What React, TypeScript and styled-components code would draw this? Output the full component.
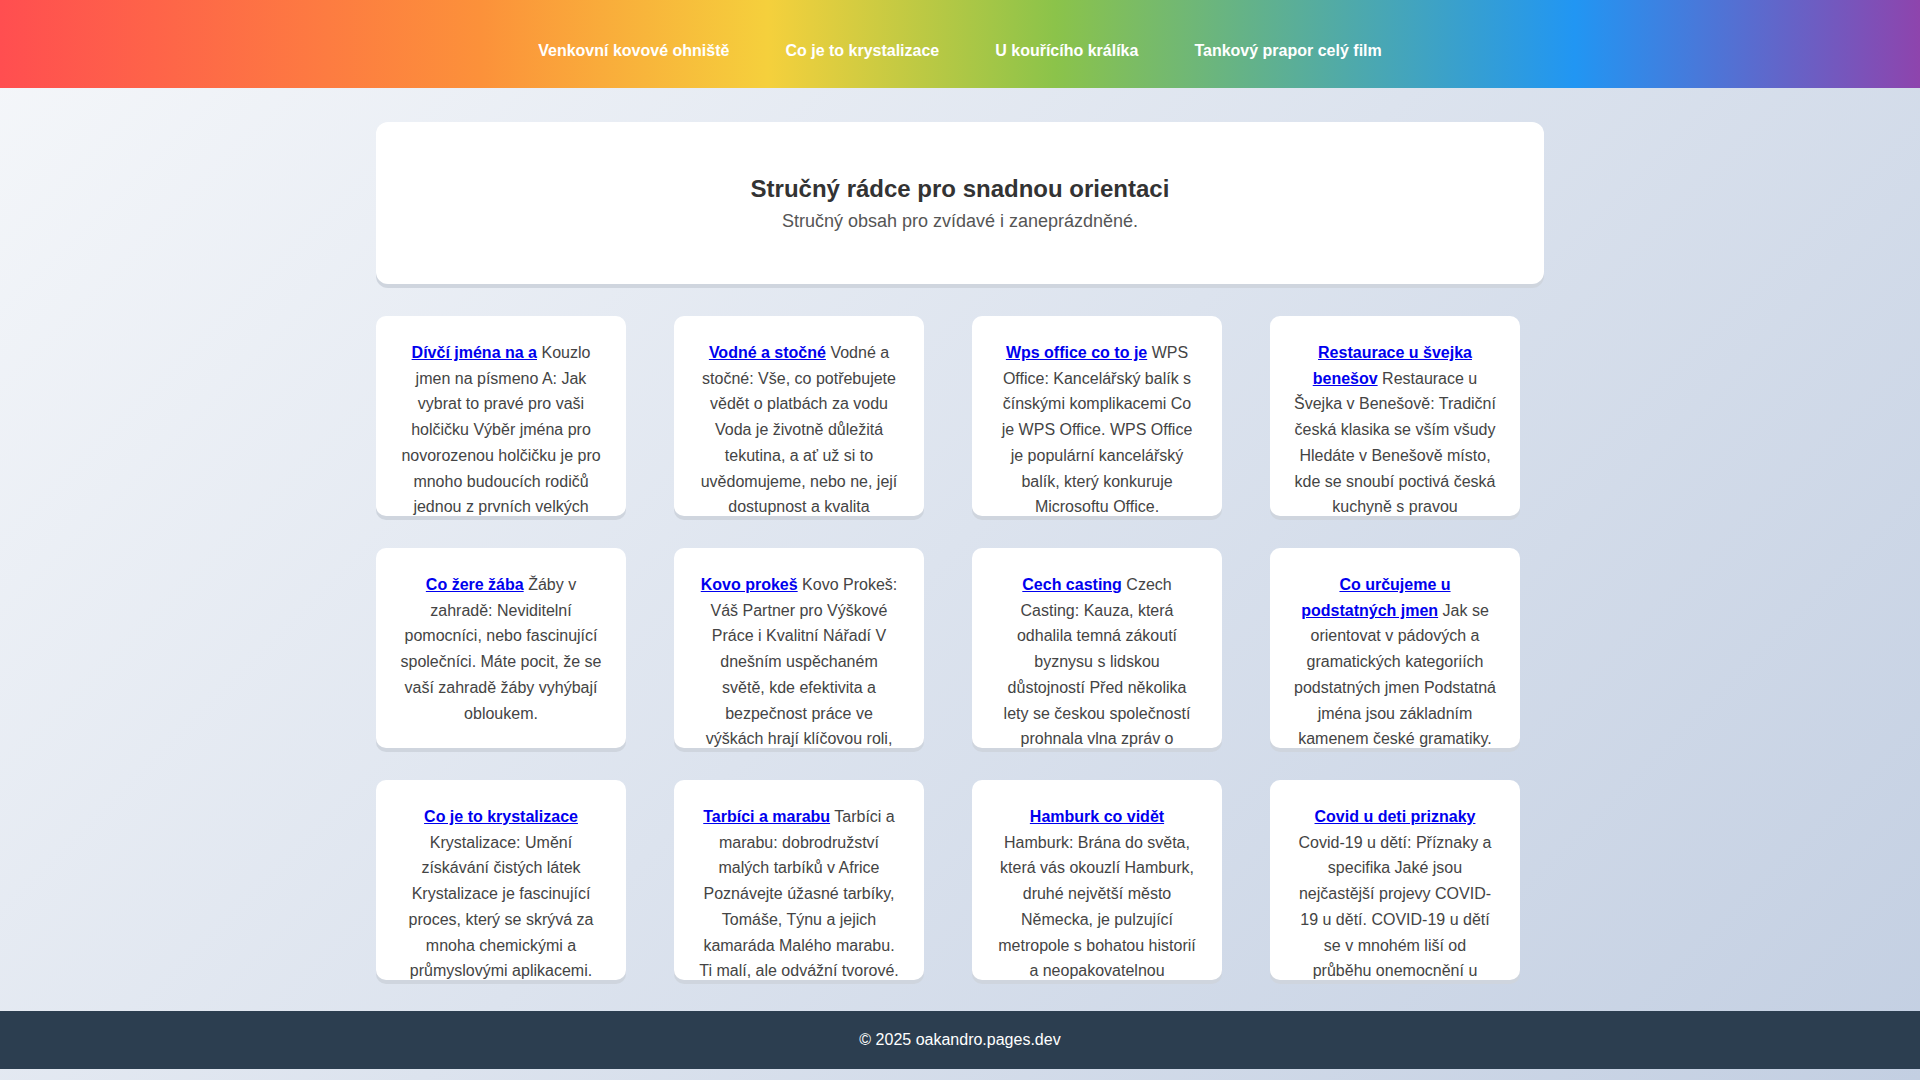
import React from "react";
import styled, { createGlobalStyle } from "styled-components";

const Global = createGlobalStyle`
  html, body { margin: 0; padding: 0; }
  body {
    font-family: "Liberation Sans", Arial, sans-serif;
    background: linear-gradient(135deg, #f5f7fa 0%, #c3cfe2 100%);
    min-height: 1080px;
  }
`;

const Header = styled.header`
  height: 88px;
  background: linear-gradient(90deg, #ff4e50 0%, #fc913a 25%, #f5d03c 40%, #8bc34a 55%, #2196f3 82%, #8e44ad 100%);
  display: flex;
  align-items: center;
  justify-content: center;
  padding-top: 14px;
  box-sizing: border-box;
`;

const Nav = styled.nav`
  display: flex;
  gap: 56px;
`;

const NavLink = styled.a`
  color: #fff;
  font-weight: bold;
  font-size: 16px;
  text-decoration: none;
`;

const Main = styled.main`
  width: 1168px;
  margin: 0 auto;
  padding: 34px 0 31px;
  display: flex;
  flex-direction: column;
  gap: 32px;
`;

const Hero = styled.section`
  background: #fff;
  border-radius: 12px;
  box-shadow: 0 4px 0 #cfd5de;
  height: 162px;
  display: flex;
  flex-direction: column;
  align-items: center;
  justify-content: center;
`;

const Title = styled.h1`
  margin: 0 0 8px;
  font-size: 24px;
  color: #333;
`;

const Sub = styled.p`
  margin: 0;
  font-size: 18px;
  color: #555;
`;

const Grid = styled.div`
  display: grid;
  grid-template-columns: repeat(4, 250px);
  column-gap: 48px;
  row-gap: 32px;
`;

const Card = styled.article`
  background: #fff;
  border-radius: 10px;
  box-shadow: 0 4px 0 #cfd5de;
  height: 200px;
  overflow: hidden;
  box-sizing: border-box;
  padding: 24px 24px 0;
  text-align: center;
  font-size: 16px;
  line-height: 25.7px;
  color: #444;
`;

const CardLink = styled.a`
  color: #0000ee;
  font-weight: bold;
  text-decoration: underline;
`;

const Footer = styled.footer`
  background: #2c3e50;
  color: #fff;
  height: 58px;
  display: flex;
  align-items: center;
  justify-content: center;
  font-size: 16px;
`;

const navs = ["Venkovní kovové ohniště", "Co je to krystalizace", "U kouřícího králíka", "Tankový prapor celý film"];

const cards: [string, string][] = [
  ["Dívčí jména na a", "Kouzlo jmen na písmeno A: Jak vybrat to pravé pro vaši holčičku Výběr jména pro novorozenou holčičku je pro mnoho budoucích rodičů jednou z prvních velkých rozhodnutí."],
  ["Vodné a stočné", "Vodné a stočné: Vše, co potřebujete vědět o platbách za vodu Voda je životně důležitá tekutina, a ať už si to uvědomujeme, nebo ne, její dostupnost a kvalita ovlivňuje."],
  ["Wps office co to je", "WPS Office: Kancelářský balík s čínskými komplikacemi Co je WPS Office. WPS Office je populární kancelářský balík, který konkuruje Microsoftu Office."],
  ["Restaurace u švejka benešov", "Restaurace u Švejka v Benešově: Tradiční česká klasika se vším všudy Hledáte v Benešově místo, kde se snoubí poctivá česká kuchyně s pravou atmosférou?"],
  ["Co žere žába", "Žáby v zahradě: Neviditelní pomocníci, nebo fascinující společníci. Máte pocit, že se vaší zahradě žáby vyhýbají obloukem."],
  ["Kovo prokeš", "Kovo Prokeš: Váš Partner pro Výškové Práce i Kvalitní Nářadí V dnešním uspěchaném světě, kde efektivita a bezpečnost práce ve výškách hrají klíčovou roli, je důležité."],
  ["Cech casting", "Czech Casting: Kauza, která odhalila temná zákoutí byznysu s lidskou důstojností Před několika lety se českou společností prohnala vlna zpráv o praktikách."],
  ["Co určujeme u podstatných jmen", "Jak se orientovat v pádových a gramatických kategoriích podstatných jmen Podstatná jména jsou základním kamenem české gramatiky."],
  ["Co je to krystalizace", "Krystalizace: Umění získávání čistých látek Krystalizace je fascinující proces, který se skrývá za mnoha chemickými a průmyslovými aplikacemi."],
  ["Tarbíci a marabu", "Tarbíci a marabu: dobrodružství malých tarbíků v Africe Poznávejte úžasné tarbíky, Tomáše, Týnu a jejich kamaráda Malého marabu. Ti malí, ale odvážní tvorové."],
  ["Hamburk co vidět", "Hamburk: Brána do světa, která vás okouzlí Hamburk, druhé největší město Německa, je pulzující metropole s bohatou historií a neopakovatelnou atmosférou."],
  ["Covid u deti priznaky", "Covid-19 u dětí: Příznaky a specifika Jaké jsou nejčastější projevy COVID-19 u dětí. COVID-19 u dětí se v mnohém liší od průběhu onemocnění u dospělých."],
];

export default function App() {
  return (
    <>
      <Global />
      <Header>
        <Nav>
          {navs.map((n) => (
            <NavLink key={n} href="#">{n}</NavLink>
          ))}
        </Nav>
      </Header>
      <Main>
        <Hero>
          <Title>Stručný rádce pro snadnou orientaci</Title>
          <Sub>Stručný obsah pro zvídavé i zaneprázdněné.</Sub>
        </Hero>
        <Grid>
          {cards.map(([t, d]) => (
            <Card key={t}>
              <CardLink href="#">{t}</CardLink> {d}
            </Card>
          ))}
        </Grid>
      </Main>
      <Footer>© 2025 oakandro.pages.dev</Footer>
    </>
  );
}
